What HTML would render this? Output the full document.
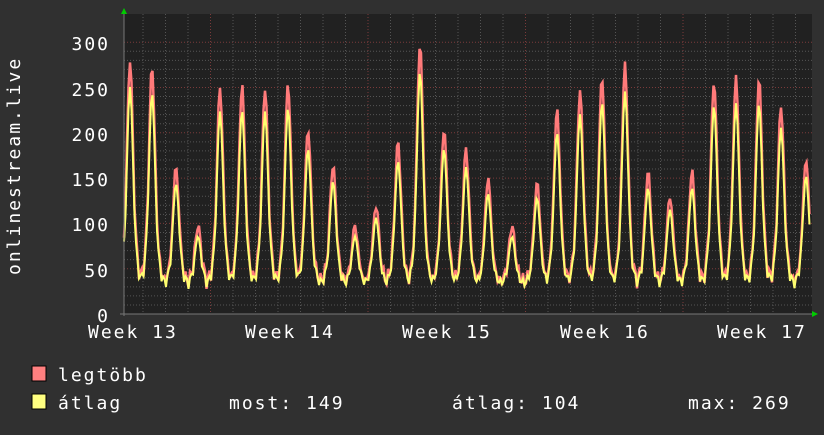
<!DOCTYPE html><html><head><meta charset="utf-8"><style>
body{margin:0;background:#303030;width:824px;height:430px;overflow:hidden}
svg text{font-family:"DejaVu Sans Mono","Liberation Mono",monospace;font-size:18px;letter-spacing:2px;fill:#fff}
</style></head><body>
<svg id="s" width="824" height="430" xmlns="http://www.w3.org/2000/svg">
<rect width="824" height="430" fill="#303030"/>
<rect x="124" y="14" width="688" height="300" fill="#212121"/>
<g id="grid"></g>
<path id="mx" fill="none" stroke="#ff7a7a" stroke-width="2.5"/>
<path id="av" fill="none" stroke="#ffff70" stroke-width="2"/>
<line x1="124" y1="12" x2="124" y2="316" stroke="#777" stroke-width="1"/>
<line x1="120" y1="314" x2="814" y2="314" stroke="#777" stroke-width="1"/>
<polygon points="121,14 127,14 124,8" fill="#0c0"/>
<polygon points="812,311 812,317 818,314" fill="#0c0"/>
<g text-anchor="end">
<text x="110" y="50">300</text><text x="110" y="96">250</text><text x="110" y="141">200</text>
<text x="110" y="186">150</text><text x="110" y="231">100</text><text x="110" y="277">50</text><text x="110" y="322">0</text>
</g>
<text x="88" y="338">Week 13</text><text x="245" y="338">Week 14</text><text x="402" y="338">Week 15</text>
<text x="560" y="338">Week 16</text><text x="717" y="338">Week 17</text>
<text transform="translate(20,275) rotate(-90)">onlinestream.live</text>
<rect x="32" y="366" width="14" height="15" fill="#ff8080" stroke="#000"/>
<rect x="32" y="394" width="14" height="15" fill="#ffff80" stroke="#000"/>
<text x="58" y="381">legtöbb</text>
<text x="58" y="409">átlag</text>
<text x="229" y="409">most: 149</text>
<text x="452" y="409">átlag: 104</text>
<text x="688" y="409">max: 269</text>
</svg>
<script>
var ns="http://www.w3.org/2000/svg",g=document.getElementById('grid');
function ln(x1,y1,x2,y2,c,d){var l=document.createElementNS(ns,'line');l.setAttribute('x1',x1);l.setAttribute('y1',y1);l.setAttribute('x2',x2);l.setAttribute('y2',y2);l.setAttribute('stroke',c);l.setAttribute('stroke-width',1);if(d)l.setAttribute('stroke-dasharray','1,2');g.appendChild(l);}
function Y(v){return 314-v*0.906;}
for(var v=10;v<=300;v+=10){ln(124,Y(v),812,Y(v),v%50?'#555':'#7a3a3a',1);}
for(var x=143;x<812;x+=22.5){var maj=Math.abs(((x-210)%157.5))<2;ln(x,14,x,314,maj?'#7a3a3a':'#555',1);}
var peaks=[[130,280],[152,273],[176,162],[198,97],[220,250],[242,252],[265,250],[288,255],[308,205],[333,165],[355,97],[376,120],[398,190],[420,300],[444,205],[466,182],[488,150],[512,97],[537,145],[557,225],[580,247],[602,262],[625,275],[648,157],[670,130],[692,157],[714,258],[736,260],[759,260],[781,230],[806,172]];
var mx="",av="";
for(var x=124;x<=810;x+=1.5){
 var best=null,bd=1e9;for(var i=0;i<peaks.length;i++){var d=Math.abs(x-peaks[i][0]);if(d<bd){bd=d;best=peaks[i];}}
 var t=Math.exp(-Math.pow(bd/3.8,2));var w=Math.exp(-Math.pow(bd/7,2));
 var base=26+14*Math.abs(Math.sin(x*0.7));
 var m=base+(best[1]-base)*(0.7*t+0.3*w)+4*Math.sin(x*1.3);
 var a=base*0.95+(best[1]*0.9-base)*(0.7*t+0.3*w);
 mx+=(mx?"L":"M")+x.toFixed(1)+","+Y(m).toFixed(1);
 av+=(av?"L":"M")+x.toFixed(1)+","+Y(a).toFixed(1);
}
document.getElementById('mx').setAttribute('d',mx);
document.getElementById('av').setAttribute('d',av);
</script>
</body></html>
